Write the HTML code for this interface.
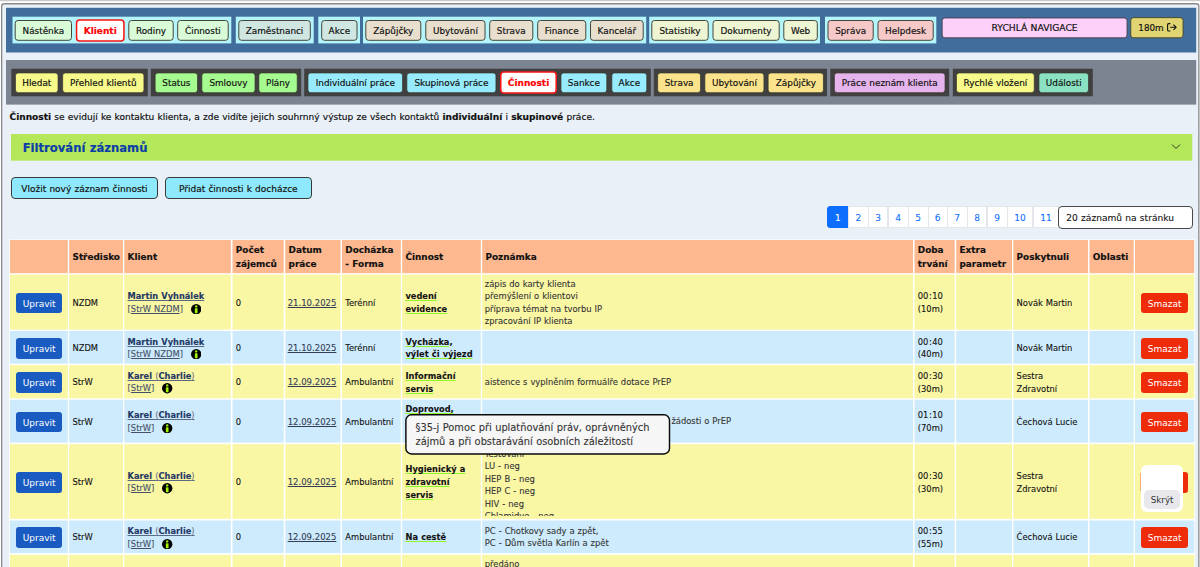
<!DOCTYPE html>
<html lang="cs"><head><meta charset="utf-8"><title>Činnosti</title>
<style>

html,body{margin:0;padding:0}
body{width:1200px;height:567px;overflow:hidden;position:relative;background:#fff;font-family:"DejaVu Sans","Liberation Sans",sans-serif;font-size:8.9px;color:#111;line-height:13.33px;word-spacing:0.3px;-webkit-text-stroke:0.18px currentColor}
.abs{position:absolute;box-sizing:border-box}
.nb{position:absolute;box-sizing:border-box;top:20px;height:20.8px;border:1px solid transparent;border-radius:3px;text-align:center;line-height:20.6px;font-size:8.85px;color:#111;white-space:nowrap}
.nb.act{top:19.2px;height:22.6px;border:2px solid transparent;color:#f00;font-weight:bold;line-height:20.4px;font-size:9px;border-radius:4px}
.grp{position:absolute;top:16.7px;height:26.6px;background:#b4f4fb}
.sb{position:absolute;box-sizing:border-box;top:72.8px;height:20px;border-radius:2.5px;text-align:center;line-height:21.6px;font-size:8.85px;color:#111;white-space:nowrap}
.sb.act{top:71.3px;height:22.6px;border:2px solid transparent;color:#f00;font-weight:bold;line-height:20.4px;font-size:9px;border-radius:4px}
.dg{position:absolute;top:68.7px;height:27.6px;background:#404040}
.btn{position:absolute;box-sizing:border-box;border:1px solid #3a3a3a;border-radius:4px;background:#8fe9fc;text-align:center;font-size:9px;color:#111;white-space:nowrap}
.pg{position:absolute;box-sizing:border-box;top:206.2px;height:21.8px;border:1px solid #e3e7eb;background:#fff;color:#0d6efd;text-align:center;line-height:22.8px;font-size:9px;-webkit-text-stroke:0.08px currentColor}
.pg.act{background:#0d6efd;border-color:#0d6efd;color:#fff;border-radius:3px 0 0 3px}
.c{position:absolute;box-sizing:border-box;padding:2.2px 3.3px 0;font-size:8.35px;line-height:12.8px;-webkit-text-stroke:0.1px currentColor;display:flex;flex-direction:column;justify-content:center;overflow:hidden}
.h{-webkit-text-stroke:0.16px currentColor;font-weight:bold;color:#111;font-size:8.9px;line-height:13.33px}
.up{position:absolute;box-sizing:border-box;left:5.9px;width:46.4px;height:20.8px;border-radius:3px;background:#1a5bc2;color:#fff;text-align:center;line-height:23.2px;font-size:9px;-webkit-text-stroke:0;overflow:hidden}
.sm{position:absolute;box-sizing:border-box;left:6.1px;width:47.1px;height:20.8px;border-radius:3px;background:#ee2c0a;color:#fff;text-align:center;line-height:23.2px;font-size:9px;-webkit-text-stroke:0;overflow:hidden}
.nm{font-weight:bold;color:#1f3864;text-decoration:underline;text-decoration-thickness:0.75px;text-underline-offset:0.6px;text-decoration-color:#5a6886;font-size:8.25px;white-space:nowrap}
.cl{padding:0 0.5px}
.par{font-weight:normal;color:#6d7488;font-size:8.35px}
.br{color:#46506a;font-size:8.35px;white-space:nowrap}
.br u{text-decoration:underline;text-decoration-thickness:0.7px;text-underline-offset:1px}
.dt{color:#333c55;text-decoration:underline;text-decoration-thickness:0.7px;text-underline-offset:1px;white-space:nowrap;font-size:8.5px}
.ac{font-weight:bold;color:#111;text-decoration:underline;text-decoration-color:#8df52a;text-decoration-thickness:1.3px;text-underline-offset:1.2px;font-size:8.25px}
.pz{font-size:8.4px;line-height:12.5px;color:#333;white-space:nowrap}
.i{display:inline-block;vertical-align:middle;width:10.4px;height:10.4px;margin-left:7.8px;position:relative;top:-0.3px}

</style></head><body>
<svg class="abs" style="left:0;top:0" width="1200" height="567" viewBox="0 0 1200 567"><rect x="0.00" y="0.00" width="1200.00" height="1.20" fill="#c9c9c9"/><rect x="1.65" y="3.75" width="1197.2" height="600" rx="2.5" fill="#e9f0f8" stroke="#8a8a8a" stroke-width="1.3"/><rect x="6.00" y="7.80" width="1190.20" height="44.70" fill="#416d9c"/><rect x="12.50" y="16.70" width="218.80" height="26.70" fill="#b4f4fb"/><rect x="235.80" y="16.70" width="77.90" height="26.70" fill="#b4f4fb"/><rect x="318.30" y="16.70" width="41.70" height="26.70" fill="#b4f4fb"/><rect x="363.00" y="16.70" width="283.20" height="26.70" fill="#b4f4fb"/><rect x="649.20" y="16.70" width="170.80" height="26.70" fill="#b4f4fb"/><rect x="825.00" y="16.70" width="111.30" height="26.70" fill="#b4f4fb"/><rect x="6.00" y="60.00" width="1190.20" height="44.60" fill="#7d8491"/><rect x="11.30" y="68.70" width="136.50" height="27.60" fill="#404040"/><rect x="150.80" y="68.70" width="150.40" height="27.60" fill="#404040"/><rect x="304.20" y="68.70" width="346.60" height="27.60" fill="#404040"/><rect x="653.80" y="68.70" width="173.20" height="27.60" fill="#404040"/><rect x="830.30" y="68.70" width="118.90" height="27.60" fill="#404040"/><rect x="952.80" y="68.70" width="140.00" height="27.60" fill="#404040"/><rect x="11.00" y="134.00" width="1181.30" height="26.70" fill="#b4e85a"/><rect x="15.20" y="20.50" width="56.30" height="19.80" rx="2.8" fill="#d9fbd8" stroke="#44463a" stroke-width="1.0"/><rect x="76.58" y="19.97" width="47.35" height="20.95" rx="3" fill="#fff" stroke="#fb1414" stroke-width="1.55"/><rect x="128.80" y="20.50" width="44.40" height="19.80" rx="2.8" fill="#d9fbd8" stroke="#44463a" stroke-width="1.0"/><rect x="177.70" y="20.50" width="50.50" height="19.80" rx="2.8" fill="#d9fbd8" stroke="#44463a" stroke-width="1.0"/><rect x="238.80" y="20.50" width="71.50" height="19.80" rx="2.8" fill="#cfe6e1" stroke="#44463a" stroke-width="1.0"/><rect x="321.70" y="20.50" width="35.30" height="19.80" rx="2.8" fill="#cfe6e1" stroke="#44463a" stroke-width="1.0"/><rect x="365.80" y="20.50" width="55.00" height="19.80" rx="2.8" fill="#e9dfce" stroke="#44463a" stroke-width="1.0"/><rect x="425.80" y="20.50" width="59.20" height="19.80" rx="2.8" fill="#e9dfce" stroke="#44463a" stroke-width="1.0"/><rect x="489.70" y="20.50" width="43.10" height="19.80" rx="2.8" fill="#e9dfce" stroke="#44463a" stroke-width="1.0"/><rect x="537.70" y="20.50" width="48.10" height="19.80" rx="2.8" fill="#e9dfce" stroke="#44463a" stroke-width="1.0"/><rect x="590.50" y="20.50" width="52.70" height="19.80" rx="2.8" fill="#e9dfce" stroke="#44463a" stroke-width="1.0"/><rect x="651.80" y="20.50" width="56.40" height="19.80" rx="2.8" fill="#eef5d2" stroke="#44463a" stroke-width="1.0"/><rect x="713.00" y="20.50" width="66.20" height="19.80" rx="2.8" fill="#eef5d2" stroke="#44463a" stroke-width="1.0"/><rect x="783.80" y="20.50" width="33.50" height="19.80" rx="2.8" fill="#eef5d2" stroke="#44463a" stroke-width="1.0"/><rect x="828.00" y="20.50" width="45.20" height="19.80" rx="2.8" fill="#f5c9c8" stroke="#44463a" stroke-width="1.0"/><rect x="878.00" y="20.50" width="55.20" height="19.80" rx="2.8" fill="#f5c9c8" stroke="#44463a" stroke-width="1.0"/><rect x="942.15" y="17.95" width="184.90" height="19.90" rx="2.8" fill="#fdd0fa" stroke="#4a3a4a" stroke-width="0.9"/><rect x="1130.75" y="17.65" width="52.30" height="20.10" rx="2.8" fill="#e0d473" stroke="#4a4520" stroke-width="0.9"/><rect x="15.45" y="72.95" width="42.60" height="19.70" rx="2.8" fill="#f8f98b" stroke="#33332a" stroke-width="0.7"/><rect x="62.65" y="72.95" width="81.30" height="19.70" rx="2.8" fill="#f8f98b" stroke="#33332a" stroke-width="0.7"/><rect x="155.15" y="72.95" width="42.40" height="19.70" rx="2.8" fill="#a6fb90" stroke="#33332a" stroke-width="0.7"/><rect x="201.85" y="72.95" width="53.20" height="19.70" rx="2.8" fill="#a6fb90" stroke="#33332a" stroke-width="0.7"/><rect x="258.85" y="72.95" width="38.40" height="19.70" rx="2.8" fill="#a6fb90" stroke="#33332a" stroke-width="0.7"/><rect x="307.95" y="72.95" width="94.60" height="19.70" rx="2.8" fill="#97ebfd" stroke="#33332a" stroke-width="0.7"/><rect x="406.85" y="72.95" width="89.10" height="19.70" rx="2.8" fill="#97ebfd" stroke="#33332a" stroke-width="0.7"/><rect x="500.77" y="72.08" width="55.45" height="20.95" rx="3" fill="#fff" stroke="#fb1414" stroke-width="1.55"/><rect x="560.95" y="72.95" width="45.80" height="19.70" rx="2.8" fill="#97ebfd" stroke="#33332a" stroke-width="0.7"/><rect x="611.85" y="72.95" width="34.90" height="19.70" rx="2.8" fill="#97ebfd" stroke="#33332a" stroke-width="0.7"/><rect x="657.65" y="72.95" width="42.90" height="19.70" rx="2.8" fill="#fbe38b" stroke="#33332a" stroke-width="0.7"/><rect x="704.85" y="72.95" width="59.10" height="19.70" rx="2.8" fill="#fbe38b" stroke="#33332a" stroke-width="0.7"/><rect x="768.15" y="72.95" width="55.30" height="19.70" rx="2.8" fill="#fbe38b" stroke="#33332a" stroke-width="0.7"/><rect x="834.35" y="72.95" width="110.70" height="19.70" rx="2.8" fill="#e6b4ec" stroke="#33332a" stroke-width="0.7"/><rect x="956.45" y="72.95" width="77.80" height="19.70" rx="2.8" fill="#f8f98b" stroke="#33332a" stroke-width="0.7"/><rect x="1038.95" y="72.95" width="49.60" height="19.70" rx="2.8" fill="#8be2c3" stroke="#33332a" stroke-width="0.7"/><rect x="9.30" y="239.40" width="1185.60" height="360.60" fill="#fff"/><rect x="10.00" y="240.00" width="57.80" height="33.20" fill="#fdb88f"/><rect x="69.20" y="240.00" width="53.80" height="33.20" fill="#fdb88f"/><rect x="124.30" y="240.00" width="106.50" height="33.20" fill="#fdb88f"/><rect x="232.50" y="240.00" width="51.20" height="33.20" fill="#fdb88f"/><rect x="285.30" y="240.00" width="55.20" height="33.20" fill="#fdb88f"/><rect x="342.00" y="240.00" width="58.80" height="33.20" fill="#fdb88f"/><rect x="402.20" y="240.00" width="78.60" height="33.20" fill="#fdb88f"/><rect x="482.20" y="240.00" width="430.80" height="33.20" fill="#fdb88f"/><rect x="914.50" y="240.00" width="40.20" height="33.20" fill="#fdb88f"/><rect x="956.20" y="240.00" width="55.80" height="33.20" fill="#fdb88f"/><rect x="1013.30" y="240.00" width="74.70" height="33.20" fill="#fdb88f"/><rect x="1089.50" y="240.00" width="44.20" height="33.20" fill="#fdb88f"/><rect x="1135.00" y="240.00" width="59.20" height="33.20" fill="#fdb88f"/><rect x="10.00" y="274.60" width="57.80" height="55.00" fill="#f9f6a4"/><rect x="69.20" y="274.60" width="53.80" height="55.00" fill="#f9f6a4"/><rect x="124.30" y="274.60" width="106.50" height="55.00" fill="#f9f6a4"/><rect x="232.50" y="274.60" width="51.20" height="55.00" fill="#f9f6a4"/><rect x="285.30" y="274.60" width="55.20" height="55.00" fill="#f9f6a4"/><rect x="342.00" y="274.60" width="58.80" height="55.00" fill="#f9f6a4"/><rect x="402.20" y="274.60" width="78.60" height="55.00" fill="#f9f6a4"/><rect x="482.20" y="274.60" width="430.80" height="55.00" fill="#f9f6a4"/><rect x="914.50" y="274.60" width="40.20" height="55.00" fill="#f9f6a4"/><rect x="956.20" y="274.60" width="55.80" height="55.00" fill="#f9f6a4"/><rect x="1013.30" y="274.60" width="74.70" height="55.00" fill="#f9f6a4"/><rect x="1089.50" y="274.60" width="44.20" height="55.00" fill="#f9f6a4"/><rect x="1135.00" y="274.60" width="59.20" height="55.00" fill="#f9f6a4"/><rect x="10.00" y="331.00" width="57.80" height="32.70" fill="#cdebfc"/><rect x="69.20" y="331.00" width="53.80" height="32.70" fill="#cdebfc"/><rect x="124.30" y="331.00" width="106.50" height="32.70" fill="#cdebfc"/><rect x="232.50" y="331.00" width="51.20" height="32.70" fill="#cdebfc"/><rect x="285.30" y="331.00" width="55.20" height="32.70" fill="#cdebfc"/><rect x="342.00" y="331.00" width="58.80" height="32.70" fill="#cdebfc"/><rect x="402.20" y="331.00" width="78.60" height="32.70" fill="#cdebfc"/><rect x="482.20" y="331.00" width="430.80" height="32.70" fill="#cdebfc"/><rect x="914.50" y="331.00" width="40.20" height="32.70" fill="#cdebfc"/><rect x="956.20" y="331.00" width="55.80" height="32.70" fill="#cdebfc"/><rect x="1013.30" y="331.00" width="74.70" height="32.70" fill="#cdebfc"/><rect x="1089.50" y="331.00" width="44.20" height="32.70" fill="#cdebfc"/><rect x="1135.00" y="331.00" width="59.20" height="32.70" fill="#cdebfc"/><rect x="10.00" y="365.20" width="57.80" height="33.10" fill="#f9f6a4"/><rect x="69.20" y="365.20" width="53.80" height="33.10" fill="#f9f6a4"/><rect x="124.30" y="365.20" width="106.50" height="33.10" fill="#f9f6a4"/><rect x="232.50" y="365.20" width="51.20" height="33.10" fill="#f9f6a4"/><rect x="285.30" y="365.20" width="55.20" height="33.10" fill="#f9f6a4"/><rect x="342.00" y="365.20" width="58.80" height="33.10" fill="#f9f6a4"/><rect x="402.20" y="365.20" width="78.60" height="33.10" fill="#f9f6a4"/><rect x="482.20" y="365.20" width="430.80" height="33.10" fill="#f9f6a4"/><rect x="914.50" y="365.20" width="40.20" height="33.10" fill="#f9f6a4"/><rect x="956.20" y="365.20" width="55.80" height="33.10" fill="#f9f6a4"/><rect x="1013.30" y="365.20" width="74.70" height="33.10" fill="#f9f6a4"/><rect x="1089.50" y="365.20" width="44.20" height="33.10" fill="#f9f6a4"/><rect x="1135.00" y="365.20" width="59.20" height="33.10" fill="#f9f6a4"/><rect x="10.00" y="399.70" width="57.80" height="42.90" fill="#cdebfc"/><rect x="69.20" y="399.70" width="53.80" height="42.90" fill="#cdebfc"/><rect x="124.30" y="399.70" width="106.50" height="42.90" fill="#cdebfc"/><rect x="232.50" y="399.70" width="51.20" height="42.90" fill="#cdebfc"/><rect x="285.30" y="399.70" width="55.20" height="42.90" fill="#cdebfc"/><rect x="342.00" y="399.70" width="58.80" height="42.90" fill="#cdebfc"/><rect x="402.20" y="399.70" width="78.60" height="42.90" fill="#cdebfc"/><rect x="482.20" y="399.70" width="430.80" height="42.90" fill="#cdebfc"/><rect x="914.50" y="399.70" width="40.20" height="42.90" fill="#cdebfc"/><rect x="956.20" y="399.70" width="55.80" height="42.90" fill="#cdebfc"/><rect x="1013.30" y="399.70" width="74.70" height="42.90" fill="#cdebfc"/><rect x="1089.50" y="399.70" width="44.20" height="42.90" fill="#cdebfc"/><rect x="1135.00" y="399.70" width="59.20" height="42.90" fill="#cdebfc"/><rect x="10.00" y="444.20" width="57.80" height="74.60" fill="#f9f6a4"/><rect x="69.20" y="444.20" width="53.80" height="74.60" fill="#f9f6a4"/><rect x="124.30" y="444.20" width="106.50" height="74.60" fill="#f9f6a4"/><rect x="232.50" y="444.20" width="51.20" height="74.60" fill="#f9f6a4"/><rect x="285.30" y="444.20" width="55.20" height="74.60" fill="#f9f6a4"/><rect x="342.00" y="444.20" width="58.80" height="74.60" fill="#f9f6a4"/><rect x="402.20" y="444.20" width="78.60" height="74.60" fill="#f9f6a4"/><rect x="482.20" y="444.20" width="430.80" height="74.60" fill="#f9f6a4"/><rect x="914.50" y="444.20" width="40.20" height="74.60" fill="#f9f6a4"/><rect x="956.20" y="444.20" width="55.80" height="74.60" fill="#f9f6a4"/><rect x="1013.30" y="444.20" width="74.70" height="74.60" fill="#f9f6a4"/><rect x="1089.50" y="444.20" width="44.20" height="74.60" fill="#f9f6a4"/><rect x="1135.00" y="444.20" width="59.20" height="74.60" fill="#f9f6a4"/><rect x="10.00" y="520.50" width="57.80" height="32.60" fill="#cdebfc"/><rect x="69.20" y="520.50" width="53.80" height="32.60" fill="#cdebfc"/><rect x="124.30" y="520.50" width="106.50" height="32.60" fill="#cdebfc"/><rect x="232.50" y="520.50" width="51.20" height="32.60" fill="#cdebfc"/><rect x="285.30" y="520.50" width="55.20" height="32.60" fill="#cdebfc"/><rect x="342.00" y="520.50" width="58.80" height="32.60" fill="#cdebfc"/><rect x="402.20" y="520.50" width="78.60" height="32.60" fill="#cdebfc"/><rect x="482.20" y="520.50" width="430.80" height="32.60" fill="#cdebfc"/><rect x="914.50" y="520.50" width="40.20" height="32.60" fill="#cdebfc"/><rect x="956.20" y="520.50" width="55.80" height="32.60" fill="#cdebfc"/><rect x="1013.30" y="520.50" width="74.70" height="32.60" fill="#cdebfc"/><rect x="1089.50" y="520.50" width="44.20" height="32.60" fill="#cdebfc"/><rect x="1135.00" y="520.50" width="59.20" height="32.60" fill="#cdebfc"/><rect x="10.00" y="554.80" width="57.80" height="92.40" fill="#f9f6a4"/><rect x="69.20" y="554.80" width="53.80" height="92.40" fill="#f9f6a4"/><rect x="124.30" y="554.80" width="106.50" height="92.40" fill="#f9f6a4"/><rect x="232.50" y="554.80" width="51.20" height="92.40" fill="#f9f6a4"/><rect x="285.30" y="554.80" width="55.20" height="92.40" fill="#f9f6a4"/><rect x="342.00" y="554.80" width="58.80" height="92.40" fill="#f9f6a4"/><rect x="402.20" y="554.80" width="78.60" height="92.40" fill="#f9f6a4"/><rect x="482.20" y="554.80" width="430.80" height="92.40" fill="#f9f6a4"/><rect x="914.50" y="554.80" width="40.20" height="92.40" fill="#f9f6a4"/><rect x="956.20" y="554.80" width="55.80" height="92.40" fill="#f9f6a4"/><rect x="1013.30" y="554.80" width="74.70" height="92.40" fill="#f9f6a4"/><rect x="1089.50" y="554.80" width="44.20" height="92.40" fill="#f9f6a4"/><rect x="1135.00" y="554.80" width="59.20" height="92.40" fill="#f9f6a4"/></svg>
<div class="nb" style="left:14.7px;width:57.3px">Nástěnka</div>
<div class="nb act" style="left:75.8px;width:48.9px">Klienti</div>
<div class="nb" style="left:128.3px;width:45.4px">Rodiny</div>
<div class="nb" style="left:177.2px;width:51.5px">Činnosti</div>
<div class="nb" style="left:238.3px;width:72.5px">Zaměstnanci</div>
<div class="nb" style="left:321.2px;width:36.3px">Akce</div>
<div class="nb" style="left:365.3px;width:56.0px">Zápůjčky</div>
<div class="nb" style="left:425.3px;width:60.2px">Ubytování</div>
<div class="nb" style="left:489.2px;width:44.1px">Strava</div>
<div class="nb" style="left:537.2px;width:49.1px">Finance</div>
<div class="nb" style="left:590px;width:53.7px">Kancelář</div>
<div class="nb" style="left:651.3px;width:57.4px">Statistiky</div>
<div class="nb" style="left:712.5px;width:67.2px">Dokumenty</div>
<div class="nb" style="left:783.3px;width:34.5px">Web</div>
<div class="nb" style="left:827.5px;width:46.2px">Správa</div>
<div class="nb" style="left:877.5px;width:56.2px">Helpdesk</div>
<div class="nb" style="left:941.7px;width:185.8px;top:17.4px;height:21px;font-size:9.2px;line-height:20.6px">RYCHLÁ NAVIGACE</div>
<div class="nb" style="left:1130.3px;width:53.6px;top:17.2px;height:21px;font-size:8.8px;line-height:20.8px;text-align:left;padding-left:7px">180m<svg style="position:absolute;left:35.4px;top:5px" width="10" height="9" viewBox="0 0 10 9"><path d="M3.4 0.6H1.7Q0.6 0.6 0.6 1.7V6.9Q0.6 8 1.7 8H3.4" fill="none" stroke="#111" stroke-width="1.1"/><path d="M3.2 4.3H9M6.5 1.7L9.1 4.3L6.5 6.9" fill="none" stroke="#111" stroke-width="1.1"/></svg></div>
<div class="sb" style="left:15.3px;width:43.0px">Hledat</div>
<div class="sb" style="left:62.5px;width:81.7px">Přehled klientů</div>
<div class="sb" style="left:155px;width:42.8px">Status</div>
<div class="sb" style="left:201.7px;width:53.6px">Smlouvy</div>
<div class="sb" style="left:258.7px;width:38.8px">Plány</div>
<div class="sb" style="left:307.8px;width:95.0px">Individuální práce</div>
<div class="sb" style="left:406.7px;width:89.5px">Skupinová práce</div>
<div class="sb act" style="left:500px;width:57.0px">Činnosti</div>
<div class="sb" style="left:560.8px;width:46.2px">Sankce</div>
<div class="sb" style="left:611.7px;width:35.3px">Akce</div>
<div class="sb" style="left:657.5px;width:43.3px">Strava</div>
<div class="sb" style="left:704.7px;width:59.5px">Ubytování</div>
<div class="sb" style="left:768px;width:55.7px">Zápůjčky</div>
<div class="sb" style="left:834.2px;width:111.1px">Práce neznám klienta</div>
<div class="sb" style="left:956.3px;width:78.2px">Rychlé vložení</div>
<div class="sb" style="left:1038.8px;width:50.0px">Události</div>
<div class="abs" style="left:9.5px;top:111.3px;font-size:9.05px;line-height:13.33px;white-space:nowrap;color:#111"><b>Činnosti</b> se evidují ke kontaktu klienta, a zde vidíte jejich souhrnný výstup ze všech kontaktů <b>individuální</b> i <b>skupinové</b> práce.</div>
<div class="abs" style="left:22.7px;top:140.4px;font-size:11.6px;line-height:16px;font-weight:bold;color:#0b3ea8;white-space:nowrap">Filtrování záznamů</div>
<svg class="abs" style="left:1170.5px;top:143px" width="10" height="7" viewBox="0 0 10 7"><path d="M1 1.5L5 5.5L9 1.5" fill="none" stroke="#333" stroke-width="1"/></svg>
<div class="btn" style="left:11.2px;top:177.2px;width:146.6px;height:21.6px;line-height:22.6px">Vložit nový záznam činnosti</div>
<div class="btn" style="left:165px;top:177.2px;width:146.7px;height:21.6px;line-height:22.6px">Přidat činnosti k docházce</div>
<div class="pg act" style="left:827px;width:21.8px">1</div>
<div class="pg" style="left:847.8px;width:20.9px">2</div>
<div class="pg" style="left:867.7px;width:20.8px">3</div>
<div class="pg" style="left:887.5px;width:21.0px">4</div>
<div class="pg" style="left:907.5px;width:21.0px">5</div>
<div class="pg" style="left:927.5px;width:20.2px">6</div>
<div class="pg" style="left:946.7px;width:21.0px">7</div>
<div class="pg" style="left:966.7px;width:20.8px">8</div>
<div class="pg" style="left:986.5px;width:21.2px">9</div>
<div class="pg" style="left:1006.7px;width:26.8px">10</div>
<div class="pg" style="left:1032.5px;width:26.8px">11</div>
<div class="abs" style="left:1058.3px;top:206.2px;width:134.5px;height:22.5px;border:1px solid #4a4a4a;border-radius:4px;background:#fff;font-size:9.1px;line-height:23px;padding-left:7px;color:#111;-webkit-text-stroke:0.1px currentColor;white-space:nowrap">20 záznamů na stránku</div>
<div class="c h" style="left:10.0px;top:240px;width:57.8px;height:33.2px;"></div>
<div class="c h" style="left:69.2px;top:240px;width:53.8px;height:33.2px;"><div>Středisko</div></div>
<div class="c h" style="left:124.3px;top:240px;width:106.5px;height:33.2px;"><div>Klient</div></div>
<div class="c h" style="left:232.5px;top:240px;width:51.2px;height:33.2px;"><div>Počet<br>zájemců</div></div>
<div class="c h" style="left:285.3px;top:240px;width:55.2px;height:33.2px;"><div>Datum<br>práce</div></div>
<div class="c h" style="left:342.0px;top:240px;width:58.8px;height:33.2px;"><div>Docházka<br>- Forma</div></div>
<div class="c h" style="left:402.2px;top:240px;width:78.6px;height:33.2px;"><div>Činnost</div></div>
<div class="c h" style="left:482.2px;top:240px;width:430.8px;height:33.2px;"><div>Poznámka</div></div>
<div class="c h" style="left:914.5px;top:240px;width:40.2px;height:33.2px;"><div>Doba<br>trvání</div></div>
<div class="c h" style="left:956.2px;top:240px;width:55.8px;height:33.2px;"><div>Extra<br>parametr</div></div>
<div class="c h" style="left:1013.3px;top:240px;width:74.7px;height:33.2px;"><div>Poskytnuli</div></div>
<div class="c h" style="left:1089.5px;top:240px;width:44.2px;height:33.2px;"><div>Oblasti</div></div>
<div class="c h" style="left:1135.0px;top:240px;width:59.2px;height:33.2px;"></div>
<div class="c y" style="left:10.0px;top:274.6px;width:57.8px;height:55.0px;"><div class="up" style="top:18.0px">Upravit</div></div>
<div class="c y" style="left:69.2px;top:274.6px;width:53.8px;height:55.0px;"><div>NZDM</div></div>
<div class="c y" style="left:124.3px;top:274.6px;width:106.5px;height:55.0px;line-height:12.4px;padding-top:1.5px;"><div><span class="nm">Martin Vyhnálek</span></div><div><span class="br">[<u>StrW NZDM</u>]</span><svg class="i" viewBox="0 0 20 20"><circle cx="10" cy="10" r="10" fill="#000"/><circle cx="10" cy="4.6" r="2.3" fill="#a4f400"/><rect x="7.4" y="8" width="5.2" height="10" rx="1.2" fill="#a4f400"/></svg></div></div>
<div class="c y" style="left:232.5px;top:274.6px;width:51.2px;height:55.0px;"><div>0</div></div>
<div class="c y" style="left:285.3px;top:274.6px;width:55.2px;height:55.0px;padding-left:2.4px;"><div><span class="dt">21.10.2025</span></div></div>
<div class="c y" style="left:342.0px;top:274.6px;width:58.8px;height:55.0px;"><div>Terénní</div></div>
<div class="c y" style="left:402.2px;top:274.6px;width:78.6px;height:55.0px;"><div><span class="ac">vedení<br>evidence</span></div></div>
<div class="c y" style="left:482.2px;top:274.6px;width:430.8px;height:55.0px;padding-left:2.6px;padding-top:1px;"><div class="pz">zápis do karty klienta<br>přemýšlení o klientovi<br>příprava témat na tvorbu IP<br>zpracování IP klienta</div></div>
<div class="c y" style="left:914.5px;top:274.6px;width:40.2px;height:55.0px;"><div>00<span class="cl">:</span>10<br>(10m)</div></div>
<div class="c y" style="left:956.2px;top:274.6px;width:55.8px;height:55.0px;"></div>
<div class="c y" style="left:1013.3px;top:274.6px;width:74.7px;height:55.0px;"><div>Novák Martin</div></div>
<div class="c y" style="left:1089.5px;top:274.6px;width:44.2px;height:55.0px;"></div>
<div class="c y" style="left:1135.0px;top:274.6px;width:59.2px;height:55.0px;"><div class="sm" style="top:18.0px">Smazat</div></div>
<div class="c b" style="left:10.0px;top:331.0px;width:57.8px;height:32.7px;"><div class="up" style="top:6.8px">Upravit</div></div>
<div class="c b" style="left:69.2px;top:331.0px;width:53.8px;height:32.7px;"><div>NZDM</div></div>
<div class="c b" style="left:124.3px;top:331.0px;width:106.5px;height:32.7px;line-height:12.4px;padding-top:1.5px;"><div><span class="nm">Martin Vyhnálek</span></div><div><span class="br">[<u>StrW NZDM</u>]</span><svg class="i" viewBox="0 0 20 20"><circle cx="10" cy="10" r="10" fill="#000"/><circle cx="10" cy="4.6" r="2.3" fill="#a4f400"/><rect x="7.4" y="8" width="5.2" height="10" rx="1.2" fill="#a4f400"/></svg></div></div>
<div class="c b" style="left:232.5px;top:331.0px;width:51.2px;height:32.7px;"><div>0</div></div>
<div class="c b" style="left:285.3px;top:331.0px;width:55.2px;height:32.7px;padding-left:2.4px;"><div><span class="dt">21.10.2025</span></div></div>
<div class="c b" style="left:342.0px;top:331.0px;width:58.8px;height:32.7px;"><div>Terénní</div></div>
<div class="c b" style="left:402.2px;top:331.0px;width:78.6px;height:32.7px;"><div><span class="ac">Vycházka,<br>výlet či výjezd</span></div></div>
<div class="c b" style="left:482.2px;top:331.0px;width:430.8px;height:32.7px;padding-left:2.6px;padding-top:1px;"><div class="pz"></div></div>
<div class="c b" style="left:914.5px;top:331.0px;width:40.2px;height:32.7px;"><div>00<span class="cl">:</span>40<br>(40m)</div></div>
<div class="c b" style="left:956.2px;top:331.0px;width:55.8px;height:32.7px;"></div>
<div class="c b" style="left:1013.3px;top:331.0px;width:74.7px;height:32.7px;"><div>Novák Martin</div></div>
<div class="c b" style="left:1089.5px;top:331.0px;width:44.2px;height:32.7px;"></div>
<div class="c b" style="left:1135.0px;top:331.0px;width:59.2px;height:32.7px;"><div class="sm" style="top:6.8px">Smazat</div></div>
<div class="c y" style="left:10.0px;top:365.2px;width:57.8px;height:33.1px;"><div class="up" style="top:7.1px">Upravit</div></div>
<div class="c y" style="left:69.2px;top:365.2px;width:53.8px;height:33.1px;"><div>StrW</div></div>
<div class="c y" style="left:124.3px;top:365.2px;width:106.5px;height:33.1px;line-height:12.4px;padding-top:1.5px;"><div><span class="nm">Karel <span class="par">(</span>Charlie<span class="par">)</span></span></div><div><span class="br">[<u>StrW</u>]</span><svg class="i" viewBox="0 0 20 20"><circle cx="10" cy="10" r="10" fill="#000"/><circle cx="10" cy="4.6" r="2.3" fill="#a4f400"/><rect x="7.4" y="8" width="5.2" height="10" rx="1.2" fill="#a4f400"/></svg></div></div>
<div class="c y" style="left:232.5px;top:365.2px;width:51.2px;height:33.1px;"><div>0</div></div>
<div class="c y" style="left:285.3px;top:365.2px;width:55.2px;height:33.1px;padding-left:2.4px;"><div><span class="dt">12.09.2025</span></div></div>
<div class="c y" style="left:342.0px;top:365.2px;width:58.8px;height:33.1px;"><div>Ambulantní</div></div>
<div class="c y" style="left:402.2px;top:365.2px;width:78.6px;height:33.1px;"><div><span class="ac">Informační<br>servis</span></div></div>
<div class="c y" style="left:482.2px;top:365.2px;width:430.8px;height:33.1px;padding-left:2.6px;padding-top:1px;"><div class="pz">aistence s vyplněním formuálře dotace PrEP</div></div>
<div class="c y" style="left:914.5px;top:365.2px;width:40.2px;height:33.1px;"><div>00<span class="cl">:</span>30<br>(30m)</div></div>
<div class="c y" style="left:956.2px;top:365.2px;width:55.8px;height:33.1px;"></div>
<div class="c y" style="left:1013.3px;top:365.2px;width:74.7px;height:33.1px;"><div>Sestra<br>Zdravotní</div></div>
<div class="c y" style="left:1089.5px;top:365.2px;width:44.2px;height:33.1px;"></div>
<div class="c y" style="left:1135.0px;top:365.2px;width:59.2px;height:33.1px;"><div class="sm" style="top:7.1px">Smazat</div></div>
<div class="c b" style="left:10.0px;top:399.7px;width:57.8px;height:42.9px;"><div class="up" style="top:12.0px">Upravit</div></div>
<div class="c b" style="left:69.2px;top:399.7px;width:53.8px;height:42.9px;"><div>StrW</div></div>
<div class="c b" style="left:124.3px;top:399.7px;width:106.5px;height:42.9px;line-height:12.4px;padding-top:1.5px;"><div><span class="nm">Karel <span class="par">(</span>Charlie<span class="par">)</span></span></div><div><span class="br">[<u>StrW</u>]</span><svg class="i" viewBox="0 0 20 20"><circle cx="10" cy="10" r="10" fill="#000"/><circle cx="10" cy="4.6" r="2.3" fill="#a4f400"/><rect x="7.4" y="8" width="5.2" height="10" rx="1.2" fill="#a4f400"/></svg></div></div>
<div class="c b" style="left:232.5px;top:399.7px;width:51.2px;height:42.9px;"><div>0</div></div>
<div class="c b" style="left:285.3px;top:399.7px;width:55.2px;height:42.9px;padding-left:2.4px;"><div><span class="dt">12.09.2025</span></div></div>
<div class="c b" style="left:342.0px;top:399.7px;width:58.8px;height:42.9px;"><div>Ambulantní</div></div>
<div class="c b" style="left:402.2px;top:399.7px;width:78.6px;height:42.9px;"><div><span class="ac">Doprovod,<br>pomoc při<br>vyřizování</span></div></div>
<div class="c b" style="left:482.2px;top:399.7px;width:430.8px;height:42.9px;padding-left:2.6px;padding-top:1px;"><div class="pz"><span style="margin-left:186.6px">žádosti o PrEP</span></div></div>
<div class="c b" style="left:914.5px;top:399.7px;width:40.2px;height:42.9px;"><div>01<span class="cl">:</span>10<br>(70m)</div></div>
<div class="c b" style="left:956.2px;top:399.7px;width:55.8px;height:42.9px;"></div>
<div class="c b" style="left:1013.3px;top:399.7px;width:74.7px;height:42.9px;"><div>Čechová Lucie</div></div>
<div class="c b" style="left:1089.5px;top:399.7px;width:44.2px;height:42.9px;"></div>
<div class="c b" style="left:1135.0px;top:399.7px;width:59.2px;height:42.9px;"><div class="sm" style="top:12.0px">Smazat</div></div>
<div class="c y" style="left:10.0px;top:444.2px;width:57.8px;height:74.6px;"><div class="up" style="top:27.8px">Upravit</div></div>
<div class="c y" style="left:69.2px;top:444.2px;width:53.8px;height:74.6px;"><div>StrW</div></div>
<div class="c y" style="left:124.3px;top:444.2px;width:106.5px;height:74.6px;line-height:12.4px;padding-top:1.5px;"><div><span class="nm">Karel <span class="par">(</span>Charlie<span class="par">)</span></span></div><div><span class="br">[<u>StrW</u>]</span><svg class="i" viewBox="0 0 20 20"><circle cx="10" cy="10" r="10" fill="#000"/><circle cx="10" cy="4.6" r="2.3" fill="#a4f400"/><rect x="7.4" y="8" width="5.2" height="10" rx="1.2" fill="#a4f400"/></svg></div></div>
<div class="c y" style="left:232.5px;top:444.2px;width:51.2px;height:74.6px;"><div>0</div></div>
<div class="c y" style="left:285.3px;top:444.2px;width:55.2px;height:74.6px;padding-left:2.4px;"><div><span class="dt">12.09.2025</span></div></div>
<div class="c y" style="left:342.0px;top:444.2px;width:58.8px;height:74.6px;"><div>Ambulantní</div></div>
<div class="c y" style="left:402.2px;top:444.2px;width:78.6px;height:74.6px;"><div><span class="ac">Hygienický a<br>zdravotní<br>servis</span></div></div>
<div class="c y" style="left:482.2px;top:444.2px;width:430.8px;height:74.6px;padding-left:2.6px;padding-top:1px;"><div class="pz" style="height:68.4px;overflow:hidden">Testování<br>LU - neg<br>HEP B - neg<br>HEP C - neg<br>HIV - neg<br>Chlamidye - neg</div></div>
<div class="c y" style="left:914.5px;top:444.2px;width:40.2px;height:74.6px;"><div>00<span class="cl">:</span>30<br>(30m)</div></div>
<div class="c y" style="left:956.2px;top:444.2px;width:55.8px;height:74.6px;"></div>
<div class="c y" style="left:1013.3px;top:444.2px;width:74.7px;height:74.6px;"><div>Sestra<br>Zdravotní</div></div>
<div class="c y" style="left:1089.5px;top:444.2px;width:44.2px;height:74.6px;"></div>
<div class="c y" style="left:1135.0px;top:444.2px;width:59.2px;height:74.6px;overflow:visible;"><div class="sm" style="top:27.8px">Smazat</div></div>
<div class="c b" style="left:10.0px;top:520.5px;width:57.8px;height:32.6px;"><div class="up" style="top:6.8px">Upravit</div></div>
<div class="c b" style="left:69.2px;top:520.5px;width:53.8px;height:32.6px;"><div>StrW</div></div>
<div class="c b" style="left:124.3px;top:520.5px;width:106.5px;height:32.6px;line-height:12.4px;padding-top:1.5px;"><div><span class="nm">Karel <span class="par">(</span>Charlie<span class="par">)</span></span></div><div><span class="br">[<u>StrW</u>]</span><svg class="i" viewBox="0 0 20 20"><circle cx="10" cy="10" r="10" fill="#000"/><circle cx="10" cy="4.6" r="2.3" fill="#a4f400"/><rect x="7.4" y="8" width="5.2" height="10" rx="1.2" fill="#a4f400"/></svg></div></div>
<div class="c b" style="left:232.5px;top:520.5px;width:51.2px;height:32.6px;"><div>0</div></div>
<div class="c b" style="left:285.3px;top:520.5px;width:55.2px;height:32.6px;padding-left:2.4px;"><div><span class="dt">12.09.2025</span></div></div>
<div class="c b" style="left:342.0px;top:520.5px;width:58.8px;height:32.6px;"><div>Ambulantní</div></div>
<div class="c b" style="left:402.2px;top:520.5px;width:78.6px;height:32.6px;"><div><span class="ac">Na cestě</span></div></div>
<div class="c b" style="left:482.2px;top:520.5px;width:430.8px;height:32.6px;padding-left:2.6px;padding-top:1px;"><div class="pz">PC - Chotkovy sady a zpět,<br>PC - Dům světla Karlín a zpět</div></div>
<div class="c b" style="left:914.5px;top:520.5px;width:40.2px;height:32.6px;"><div>00<span class="cl">:</span>55<br>(55m)</div></div>
<div class="c b" style="left:956.2px;top:520.5px;width:55.8px;height:32.6px;"></div>
<div class="c b" style="left:1013.3px;top:520.5px;width:74.7px;height:32.6px;"><div>Čechová Lucie</div></div>
<div class="c b" style="left:1089.5px;top:520.5px;width:44.2px;height:32.6px;"></div>
<div class="c b" style="left:1135.0px;top:520.5px;width:59.2px;height:32.6px;"><div class="sm" style="top:6.8px">Smazat</div></div>
<div class="c y" style="left:10.0px;top:554.8px;width:57.8px;height:92.4px;"><div class="up" style="top:36.7px">Upravit</div></div>
<div class="c y" style="left:69.2px;top:554.8px;width:53.8px;height:92.4px;"><div>StrW</div></div>
<div class="c y" style="left:124.3px;top:554.8px;width:106.5px;height:92.4px;line-height:12.4px;padding-top:1.5px;"><div><span class="nm">Karel <span class="par">(</span>Charlie<span class="par">)</span></span></div><div><span class="br">[<u>StrW</u>]</span><svg class="i" viewBox="0 0 20 20"><circle cx="10" cy="10" r="10" fill="#000"/><circle cx="10" cy="4.6" r="2.3" fill="#a4f400"/><rect x="7.4" y="8" width="5.2" height="10" rx="1.2" fill="#a4f400"/></svg></div></div>
<div class="c y" style="left:232.5px;top:554.8px;width:51.2px;height:92.4px;"><div>0</div></div>
<div class="c y" style="left:285.3px;top:554.8px;width:55.2px;height:92.4px;padding-left:2.4px;"><div><span class="dt">12.09.2025</span></div></div>
<div class="c y" style="left:342.0px;top:554.8px;width:58.8px;height:92.4px;"><div>Ambulantní</div></div>
<div class="c y" style="left:402.2px;top:554.8px;width:78.6px;height:92.4px;"><div><span class="ac">Informační<br>servis</span></div></div>
<div class="c y" style="left:482.2px;top:554.8px;width:430.8px;height:92.4px;padding-left:2.6px;padding-top:1px;"><div class="pz">předáno<br>informace o službě<br>kontakty<br>materiál<br>domluva dalšího setkání<br>rozloučení<br>konec</div></div>
<div class="c y" style="left:914.5px;top:554.8px;width:40.2px;height:92.4px;"><div>00<span class="cl">:</span>20<br>(20m)</div></div>
<div class="c y" style="left:956.2px;top:554.8px;width:55.8px;height:92.4px;"></div>
<div class="c y" style="left:1013.3px;top:554.8px;width:74.7px;height:92.4px;"><div>Čechová Lucie</div></div>
<div class="c y" style="left:1089.5px;top:554.8px;width:44.2px;height:92.4px;"></div>
<div class="c y" style="left:1135.0px;top:554.8px;width:59.2px;height:92.4px;"><div class="sm" style="top:36.7px">Smazat</div></div>
<div class="abs" style="left:1141.1px;top:465.2px;width:41.8px;height:46.8px;background:#fff;border-radius:6px"></div>
<div class="abs" style="left:1144.1px;top:490.3px;width:36.1px;height:18.8px;background:#e8e8ec;border-radius:5px;text-align:center;line-height:20.6px;font-size:8.7px;color:#333;-webkit-text-stroke:0">Skrýt</div>
<div class="abs" style="left:1140.2px;top:473px;width:1px;height:18px;background:rgba(238,44,10,.35)"></div>
<svg class="abs" style="left:403px;top:412px" width="270" height="45" viewBox="0 0 270 45"><rect x="2.9" y="2.8" width="263.6" height="39.1" rx="5.5" ry="5.5" fill="#f6f6f6" stroke="#0a0a0a" stroke-width="1.45"/></svg>
<div class="abs" style="left:415.6px;top:421.4px;font-size:9.84px;line-height:13.4px;color:#333;white-space:nowrap;-webkit-text-stroke:0.1px currentColor">§35-j Pomoc při uplatňování práv, oprávněných<br>zájmů a při obstarávání osobních záležitostí</div>
</body></html>
